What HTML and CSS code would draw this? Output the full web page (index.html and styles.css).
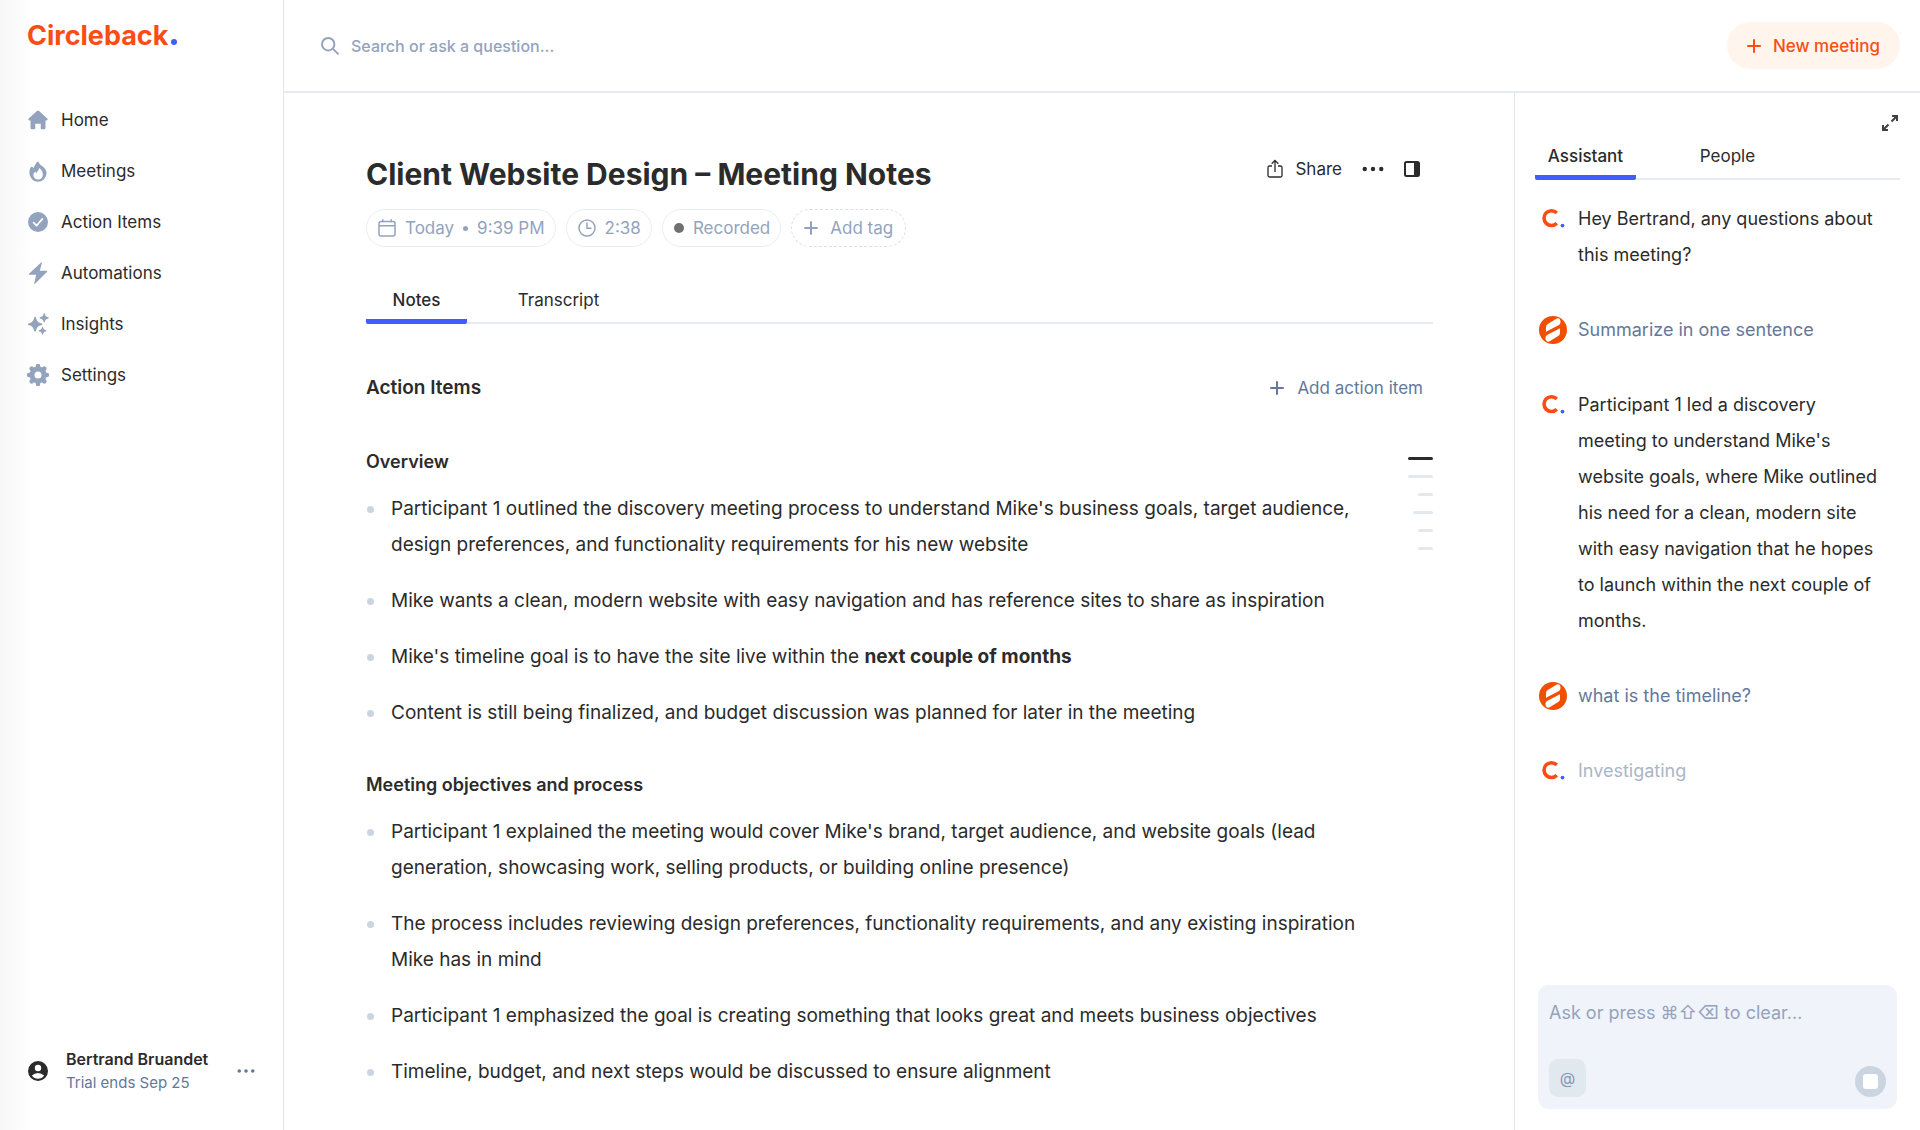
FILE: index.html
```html
<!DOCTYPE html>
<html lang="en">
<head>
    <meta charset="UTF-8">
    <meta name="viewport" content="width=device-width, initial-scale=1.0">
    <title>Client Website Design – Meeting Notes</title>
    <link rel="stylesheet" href="styles.css">
</head>
<body>
    <!-- shared icons -->
    <svg class="sprite" aria-hidden="true">
        <symbol id="plus" viewBox="0 0 14 14"><path d="M7 1v12M1 7h12" fill="none" stroke="currentColor" stroke-width="2" stroke-linecap="round"/></symbol>
        <symbol id="dots" viewBox="0 0 24 8"><g fill="currentColor"><circle cx="3" cy="4" r="2.4"/><circle cx="12" cy="4" r="2.4"/><circle cx="21" cy="4" r="2.4"/></g></symbol>
        <symbol id="bot" viewBox="0 0 28 28">
            <path d="M17.800 8A7.400 7.400 0 1 0 17.800 18.200" fill="none" stroke="#fa4d16" stroke-width="3.600"/>
            <circle cx="23.500" cy="20.600" r="1.900" fill="#3f5efb"/>
        </symbol>
        <symbol id="me" viewBox="0 0 28 28">
            <circle cx="14" cy="14" r="14" fill="#f04e00"/>
            <path d="M7 15.800V11Q7 9 8.800 8L16.500 3.200Q20.500 1 21.400 4.500Q22 8 19.500 9.300z" fill="#fff"/>
            <path d="M7 15.800V11Q7 9 8.800 8L16.500 3.200Q20.500 1 21.400 4.500Q22 8 19.500 9.300z" fill="#fff" transform="rotate(180 14 14)"/>
        </symbol>
    </svg>

    <div class="app">
        <aside class="sidebar">
            <a class="logo" href="#">Circleback<span class="logoDot"></span></a>
            <nav class="nav">
                <a href="#">
                    <svg viewBox="0 0 24 24"><path d="M10.700 1.200a1.900 1.900 0 0 1 2.600 0l9.800 9c1 .9.400 2.300-.9 2.300H21v8.700A1.800 1.800 0 0 1 19.200 23H16.500a1.200 1.200 0 0 1-1.200-1.200V16.500H8.700v5.300A1.200 1.200 0 0 1 7.500 23H4.800A1.800 1.800 0 0 1 3 21.200V12.500H1.800C.5 12.500-.1 11.100.9 10.200z"/></svg>
                    Home
                </a>
                <a href="#">
                    <svg viewBox="0 0 24 24"><path fill-rule="evenodd" d="M12.300.2c.6 2.300 2.200 4 4.200 5.600C19.600 8.300 22.300 10.500 22.300 14.500A10.300 10.300 0 0 1 1.700 14.500C1.700 11.200 2.200 8.700 3.600 7.300c.8-.8 1.900-.3 2.700 1C7.700 7.500 7.800 3.500 12.300.2zM13.500 8.400c-.4 3.300-3 4.200-3.700 6.500C9.300 14 9 13.300 9 12.500c-1.700 1-2.600 2.600-2.600 4.200a5.700 5.700 0 0 0 11.400-.2C17.800 12.500 16 10 13.500 8.400z"/></svg>
                    Meetings
                </a>
                <a href="#">
                    <svg viewBox="0 0 24 24"><circle cx="12" cy="12" r="12"/><path d="M6.700 12.700l3.600 3.600 7-8" fill="none" stroke="#fff" stroke-width="2" stroke-linecap="round" stroke-linejoin="round"/></svg>
                    Action Items
                </a>
                <a href="#">
                    <svg viewBox="0 0 24 24"><path d="M15.700-.7L1.200 13c-.6.700-.3 1.200.5 1.200h8.100L7.500 24.300c-.1.900.4 1.100 1 .5L22.700 10.700c.7-.7.400-1.300-.5-1.300h-8L16.600.1c.2-.9-.3-1.300-.9-.8z"/></svg>
                    Automations
                </a>
                <a href="#">
                    <svg viewBox="0 0 24 24"><path d="M8.500 3.200c.5 0 .8.300 1 .9 1.300 4.700 2.400 5.900 7 7.200.9.300.9 1.500 0 1.800-4.600 1.300-5.700 2.500-7 7.200-.3.900-1.700.9-2 0-1.300-4.700-2.400-5.900-7-7.200-.9-.3-.9-1.500 0-1.800 4.600-1.300 5.700-2.500 7-7.200.2-.6.500-.9 1-.9zM19.400-.9c.3 0 .6.200.7.600.7 2.800 1.500 3.600 4.300 4.300.8.200.8 1.100 0 1.300-2.800.7-3.600 1.500-4.300 4.300-.2.800-1.200.8-1.400 0-.7-2.800-1.500-3.600-4.300-4.300-.8-.2-.8-1.100 0-1.300 2.800-.7 3.600-1.500 4.300-4.300.1-.4.400-.6.700-.6zM17.400 15.500c.3 0 .5.200.6.500.6 2.300 1.200 3 3.600 3.600.7.200.7 1 0 1.200-2.400.6-3 1.300-3.600 3.600-.2.700-1 .7-1.200 0-.6-2.300-1.200-3-3.600-3.600-.7-.2-.7-1 0-1.200 2.400-.6 3-1.300 3.600-3.600.1-.3.300-.5.600-.5z"/></svg>
                    Insights
                </a>
                <a href="#">
                    <svg viewBox="0 0 24 24"><circle cx="12" cy="12" r="7.200" fill="none" stroke="currentColor" stroke-width="6"/><g stroke="currentColor" stroke-width="5.500" stroke-linecap="round"><path d="M12 1.300v2M12 20.700v2M1.300 12h2M20.700 12h2M4.400 4.400l1.400 1.400M18.200 18.200l1.400 1.400M4.400 19.600l1.400-1.400M18.200 5.800l1.400-1.400"/></g></svg>
                    Settings
                </a>
            </nav>
            <div class="account">
                <svg class="accountIcon" viewBox="0 0 20 20"><circle cx="10" cy="10" r="10" fill="#2b2b2b"/><circle cx="10" cy="7" r="3.200" fill="#fff"/><path d="M3.900 14.500Q6.500 11.900 10 11.900T16.100 14.500Q13.800 17.700 10 17.700T3.900 14.500z" fill="#fff"/></svg>
                <div class="accountText">
                    <p class="accountName">Bertrand Bruandet</p>
                    <p class="accountPlan">Trial ends Sep 25</p>
                </div>
                <button class="iconBtn accountMenu" aria-label="Account menu"><svg width="18" height="6"><use href="#dots"/></svg></button>
            </div>
        </aside>

        <div class="page">
            <header class="topbar">
                <label class="search">
                    <svg width="18" height="18" viewBox="0 0 18 18"><g fill="none" stroke="currentColor" stroke-width="2"><circle cx="7.200" cy="7.200" r="6.200"/><path d="M11.600 11.600l6 5.800"/></g></svg>
                    <input type="text" placeholder="Search or ask a question…" aria-label="Search">
                </label>
                <button class="newMeeting"><svg width="14" height="14"><use href="#plus"/></svg>New meeting</button>
            </header>

            <div class="content">
                <main class="meeting">
                    <div class="titleRow">
                        <h1>Client Website Design – Meeting Notes</h1>
                        <div class="actions">
                            <button class="shareBtn">
                                <svg width="16" height="20" viewBox="0 0 16 20"><path d="M5 7H2.500Q1 7 1 8.500v8Q1 18 2.500 18h11Q15 18 15 16.500v-8Q15 7 13.500 7H11M8 13V1.500M4.700 4.700L8 1.400l3.300 3.300" fill="none" stroke="currentColor" stroke-width="1.300"/></svg>
                                Share
                            </button>
                            <button class="iconBtn" aria-label="More"><svg width="22" height="8"><use href="#dots"/></svg></button>
                            <button class="iconBtn" aria-label="Toggle panel"><svg width="16" height="16" viewBox="0 0 16 16"><rect x="1" y="1" width="14" height="14" rx="1.500" fill="none" stroke="currentColor" stroke-width="2"/><path d="M10 1h5v14h-5z" fill="currentColor"/></svg></button>
                        </div>
                    </div>

                    <div class="tags">
                        <span class="tag">
                            <svg width="18" height="18" viewBox="0 0 18 18"><g fill="none" stroke="currentColor" stroke-width="1.500"><rect x="1" y="2.500" width="16" height="14.500" rx="2"/><path d="M1 6.700h16M4.800.3v3M13.200.3v3"/></g></svg>
                            <span>Today</span><i class="sep"></i><span>9:39 PM</span>
                        </span>
                        <span class="tag">
                            <svg width="18" height="18" viewBox="0 0 18 18"><g fill="none" stroke="currentColor" stroke-width="1.500"><circle cx="9" cy="9" r="8"/><path d="M9 3.500V9.300h4.500"/></g></svg>
                            <span>2:38</span>
                        </span>
                        <span class="tag"><i class="rec"></i><span>Recorded</span></span>
                        <button class="tag addTag"><svg width="14" height="14"><use href="#plus"/></svg>Add tag</button>
                    </div>

                    <div class="tabs">
                        <button class="tab active">Notes</button>
                        <button class="tab">Transcript</button>
                    </div>

                    <div class="sectionHead">
                        <h2>Action Items</h2>
                        <button class="addAction"><svg width="14" height="14"><use href="#plus"/></svg>Add action item</button>
                    </div>

                    <div class="notes">
                        <div class="notesText">
                            <h2>Overview</h2>
                            <ul>
                                <li>Participant 1 outlined the discovery meeting process to understand Mike's business goals, target audience, design preferences, and functionality requirements for his new website</li>
                                <li>Mike wants a clean, modern website with easy navigation and has reference sites to share as inspiration</li>
                                <li>Mike's timeline goal is to have the site live within the <b>next couple of months</b></li>
                                <li>Content is still being finalized, and budget discussion was planned for later in the meeting</li>
                            </ul>
                            <h2>Meeting objectives and process</h2>
                            <ul>
                                <li>Participant 1 explained the meeting would cover Mike's brand, target audience, and website goals (lead generation, showcasing work, selling products, or building online presence)</li>
                                <li>The process includes reviewing design preferences, functionality requirements, and any existing inspiration Mike has in mind</li>
                                <li>Participant 1 emphasized the goal is creating something that looks great and meets business objectives</li>
                                <li>Timeline, budget, and next steps would be discussed to ensure alignment</li>
                            </ul>
                        </div>
                        <div class="outline">
                            <span class="current"></span>
                            <span></span>
                            <span class="short"></span>
                            <span class="mid"></span>
                            <span class="short"></span>
                            <span class="short"></span>
                        </div>
                    </div>
                </main>

                <aside class="panel">
                    <button class="iconBtn expand" aria-label="Expand"><svg width="16" height="16" viewBox="0 0 16 16"><path d="M10 1h5v5M15 1L9.500 6.500M6 15H1v-5M1 15l5.500-5.500" fill="none" stroke="#404040" stroke-width="2"/></svg></button>
                    <div class="tabs">
                        <button class="tab active">Assistant</button>
                        <button class="tab">People</button>
                    </div>
                    <div class="chat">
                        <div class="msg"><svg width="28" height="28"><use href="#bot"/></svg><p>Hey Bertrand, any questions about this meeting?</p></div>
                        <div class="msg mine"><svg width="28" height="28"><use href="#me"/></svg><p>Summarize in one sentence</p></div>
                        <div class="msg"><svg width="28" height="28"><use href="#bot"/></svg><p>Participant 1 led a discovery meeting to understand Mike's website goals, where Mike outlined his need for a clean, modern site with easy navigation that he hopes to launch within the next couple of months.</p></div>
                        <div class="msg mine"><svg width="28" height="28"><use href="#me"/></svg><p>what is the timeline?</p></div>
                        <div class="msg pending"><svg width="28" height="28"><use href="#bot"/></svg><p>Investigating</p></div>
                    </div>
                    <form class="composer">
                        <textarea rows="1" placeholder="Ask or press ⌘⇧⌫ to clear…" aria-label="Ask the assistant"></textarea>
                        <div class="composerRow">
                            <button type="button" class="mention">@</button>
                            <button type="button" class="stop" aria-label="Stop"></button>
                        </div>
                    </form>
                </aside>
            </div>
        </div>
    </div>
</body>
</html>
```
FILE: styles.css
```css
*{
    padding: 0;
    margin: 0;
    box-sizing: border-box;
}
body{
    font-family: Inter, "DejaVu Sans", sans-serif;
    font-size: 17px;
    color: #2b2b2b;
    background-color: white;
}
button{
    font: inherit;
    color: inherit;
    background: none;
    border: none;
    cursor: pointer;
}
a{
    color: inherit;
    text-decoration: none;
}
svg{
    flex-shrink: 0;
    overflow: visible;
}
.sprite{
    display: none;
}
.app{
    display: flex;
    height: 100vh;
}

/* sidebar */
.sidebar{
    width: 284px;
    flex-shrink: 0;
    display: flex;
    flex-direction: column;
    padding: 18px 28px 35px 27px;
    border-right: 1px solid #dfe6f0;
    background: linear-gradient(to right, #f7f7f7, white 34px);
}
.logo{
    display: flex;
    align-items: baseline;
    font-size: 27px;
    line-height: 36px;
    font-weight: 700;
    color: #fa4d16;
}
.logoDot{
    width: 6px;
    height: 6px;
    margin-left: 3px;
    border-radius: 50%;
    background-color: #3f5efb;
}
.nav{
    display: flex;
    flex-direction: column;
    margin-top: 40px;
}
.nav a{
    display: flex;
    align-items: center;
    gap: 13px;
    height: 51px;
    padding-left: 1px;
}
.nav svg{
    width: 20px;
    height: 20px;
    fill: #94a3bd;
    color: #94a3bd;
}
.account{
    display: flex;
    align-items: center;
    margin-top: auto;
    padding-left: 1px;
}
.accountIcon{
    width: 20px;
    height: 20px;
}
.accountText{
    margin-left: 18px;
    line-height: 24px;
}
.accountName{
    font-size: 16px;
    font-weight: 600;
}
.accountPlan{
    font-size: 15px;
    color: #64789b;
}
.iconBtn{
    display: flex;
}
.accountMenu{
    margin-left: auto;
    color: #64789b;
}

/* top bar */
.page{
    flex: 1;
    min-width: 0;
    display: flex;
    flex-direction: column;
}
.topbar{
    display: flex;
    justify-content: space-between;
    align-items: center;
    height: 93px;
    flex-shrink: 0;
    padding: 0 20px 0 37px;
    border-bottom: 2px solid #e6ebf1;
}
.search{
    display: flex;
    align-items: center;
    gap: 12px;
    flex: 1;
    color: #94a3bd;
}
.search input{
    flex: 1;
    border: none;
    outline: none;
    background: none;
    font: inherit;
    font-size: 16px;
    font-weight: 500;
}
.search input::placeholder,.composer textarea::placeholder{
    color: #94a3bd;
    opacity: 1;
}
.newMeeting{
    display: flex;
    align-items: center;
    gap: 12px;
    height: 47px;
    padding: 0 20px;
    border-radius: 24px;
    font-weight: 500;
    color: #fa4d16;
    background-color: #fff5ed;
}

/* meeting */
.content{
    flex: 1;
    min-height: 0;
    display: flex;
}
.meeting{
    flex: 1;
    min-width: 0;
    padding: 58px 81px 0 82px;
    overflow: hidden;
}
.titleRow{
    display: flex;
    justify-content: space-between;
}
h1{
    font-size: 30px;
    line-height: 46px;
    font-weight: 700;
}
.actions{
    display: flex;
    align-items: center;
    gap: 20px;
    height: 36px;
    padding-right: 13px;
}
.shareBtn{
    display: flex;
    align-items: center;
    gap: 12px;
}
.tags{
    display: flex;
    gap: 10px;
    margin-top: 12px;
}
.tag{
    display: flex;
    align-items: center;
    gap: 9px;
    height: 38px;
    padding: 0 10px 0 11px;
    border: 1px solid #e9edf6;
    border-radius: 19px;
    color: #94a3bd;
}
.addTag{
    gap: 12px;
    padding: 0 12px;
    border: 1px dashed #d8dfeb;
}
.sep{
    width: 5px;
    height: 5px;
    border-radius: 50%;
    background-color: #94a3bd;
}
.rec{
    width: 10px;
    height: 10px;
    border-radius: 50%;
    background-color: #707070;
}
.tabs{
    display: flex;
    gap: 41px;
    border-bottom: 2px solid #e6ebf1;
}
.meeting .tabs{
    margin-top: 33px;
}
.tab{
    width: 101px;
    height: 44px;
    margin-bottom: -2px;
    border-bottom: 5px solid transparent;
}
.tab.active{
    font-weight: 500;
    border-radius: 2px;
    background: linear-gradient(#3f5efb, #3f5efb) bottom / 100% 5px no-repeat border-box;
}
.sectionHead{
    display: flex;
    justify-content: space-between;
    align-items: center;
    margin-top: 46px;
    height: 36px;
}
h2{
    font-size: 18px;
    line-height: 36px;
    font-weight: 600;
}
.sectionHead h2{
    font-size: 19px;
}
.addAction{
    display: flex;
    align-items: center;
    gap: 13px;
    padding-right: 10px;
    color: #64789b;
}
.notes{
    display: flex;
    justify-content: space-between;
    margin-top: 38px;
}
.notesText{
    flex: 1;
    max-width: 990px;
}
.notes ul{
    list-style: none;
    padding-left: 25px;
    margin-top: 11px;
    margin-bottom: 36px;
}
.notes li{
    position: relative;
    font-size: 19px;
    line-height: 36px;
    margin-bottom: 20px;
}
.notes li:last-child{
    margin-bottom: 0;
}
.notes li::before{
    content: "";
    position: absolute;
    left: -24px;
    top: 15px;
    width: 7px;
    height: 7px;
    border-radius: 50%;
    background-color: #cbd5e1;
}
.outline{
    display: flex;
    flex-direction: column;
    align-items: flex-end;
    gap: 15px;
    padding-top: 13px;
}
.outline span{
    width: 25px;
    height: 3px;
    border-radius: 2px;
    background-color: #e2e8f0;
}
.outline .mid{
    width: 20px;
}
.outline .short{
    width: 15px;
}
.outline .current{
    background-color: #2b2b2b;
}

/* assistant panel */
.panel{
    width: 406px;
    flex-shrink: 0;
    display: flex;
    flex-direction: column;
    padding: 22px 20px 21px;
    border-left: 1px solid #dfe6f0;
}
.expand{
    align-self: flex-end;
    margin-right: 2px;
}
.panel .tabs{
    margin-top: 5px;
}
.chat{
    display: flex;
    flex-direction: column;
    gap: 39px;
    padding: 21px 14px 0 4px;
    flex: 1;
}
.msg{
    display: flex;
    gap: 11px;
    font-size: 18px;
    line-height: 36px;
}
.msg svg{
    margin-top: 4px;
}
.mine{
    color: #64789b;
}
.pending{
    color: #a9b6c9;
}
.composer{
    margin: 0 3px;
    padding: 10px 11px 12px;
    border-radius: 11px;
    background-color: #f0f3f9;
}
.composer textarea{
    display: block;
    width: 100%;
    height: 36px;
    border: none;
    outline: none;
    resize: none;
    background: none;
    font: inherit;
    font-size: 18px;
    line-height: 36px;
}
.composerRow{
    display: flex;
    justify-content: space-between;
    align-items: flex-end;
    margin-top: 28px;
}
.mention{
    width: 37px;
    height: 38px;
    border-radius: 9px;
    font-size: 16px;
    color: #8497b3;
    background-color: #e2e8f0;
}
.stop{
    display: flex;
    width: 31px;
    height: 31px;
    border: 8px solid #cbd5e1;
    border-radius: 50%;
    background-color: #cbd5e1;
}
.stop::before{
    content: "";
    flex: 1;
    align-self: stretch;
    border-radius: 3px;
    background-color: white;
}
```
